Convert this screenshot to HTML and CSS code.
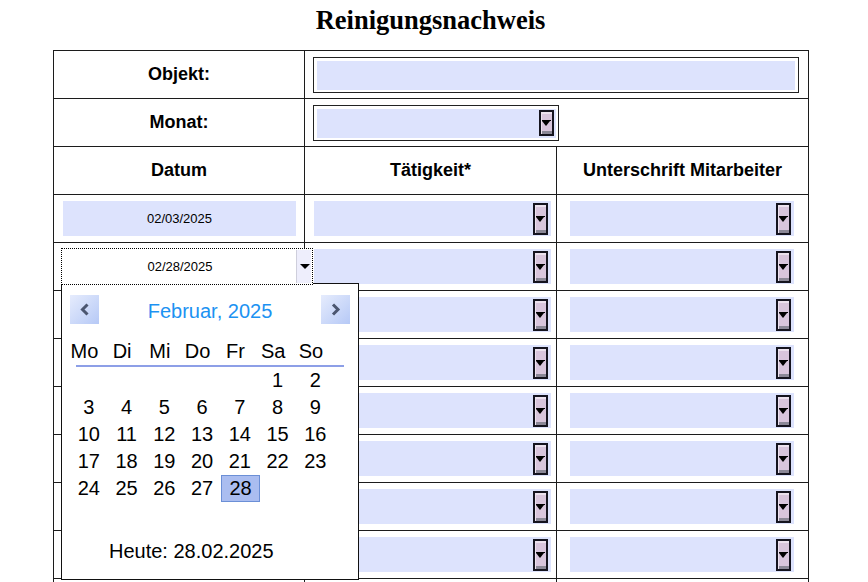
FILE: index.html
```html
<!DOCTYPE html>
<html lang="de">
<head>
    <meta charset="UTF-8">
    <title>Reinigungsnachweis</title>
    <link rel="stylesheet" href="styles.css">
</head>
<body>

<div class="page">
    <h1>Reinigungsnachweis</h1>

    <table class="sheet">
        <colgroup>
            <col class="c1">
            <col class="c2">
            <col class="c3">
        </colgroup>
        <tr>
            <th>Objekt:</th>
            <td colspan="2"><div class="text-input"><div class="fill"></div></div></td>
        </tr>
        <tr>
            <th>Monat:</th>
            <td colspan="2"><div class="month-select"><div class="fill"><span class="dd small"></span></div></div></td>
        </tr>
        <tr>
            <th>Datum</th>
            <th>Tätigkeit*</th>
            <th>Unterschrift Mitarbeiter</th>
        </tr>
        <tr>
            <td><div class="date-field">02/03/2025</div></td>
            <td><div class="field job"><span class="dd"></span></div></td>
            <td><div class="field sign"><span class="dd"></span></div></td>
        </tr>
        <tr>
            <td><div class="date-field focused">02/28/2025<span class="picker-btn"></span></div></td>
            <td><div class="field job"><span class="dd"></span></div></td>
            <td><div class="field sign"><span class="dd"></span></div></td>
        </tr>
        <tr>
            <td><div class="date-field"></div></td>
            <td><div class="field job"><span class="dd"></span></div></td>
            <td><div class="field sign"><span class="dd"></span></div></td>
        </tr>
        <tr>
            <td><div class="date-field"></div></td>
            <td><div class="field job"><span class="dd"></span></div></td>
            <td><div class="field sign"><span class="dd"></span></div></td>
        </tr>
        <tr>
            <td><div class="date-field"></div></td>
            <td><div class="field job"><span class="dd"></span></div></td>
            <td><div class="field sign"><span class="dd"></span></div></td>
        </tr>
        <tr>
            <td><div class="date-field"></div></td>
            <td><div class="field job"><span class="dd"></span></div></td>
            <td><div class="field sign"><span class="dd"></span></div></td>
        </tr>
        <tr>
            <td><div class="date-field"></div></td>
            <td><div class="field job"><span class="dd"></span></div></td>
            <td><div class="field sign"><span class="dd"></span></div></td>
        </tr>
        <tr>
            <td><div class="date-field"></div></td>
            <td><div class="field job"><span class="dd"></span></div></td>
            <td><div class="field sign"><span class="dd"></span></div></td>
        </tr>
        <tr>
            <td><div class="date-field"></div></td>
            <td><div class="field job"><span class="dd"></span></div></td>
            <td><div class="field sign"><span class="dd"></span></div></td>
        </tr>
    </table>

    <!-- Kalender-Popup zum Datumsfeld -->
    <div class="calendar">
        <div class="cal-head">
            <span class="nav">
                <svg width="29" height="29" viewBox="0 0 29 29"><polyline points="17.5,9.5 12.5,14.5 17.5,19.5" fill="none" stroke="#4b5670" stroke-width="3"/></svg>
            </span>
            <span class="cal-title">Februar, 2025</span>
            <span class="nav">
                <svg width="29" height="29" viewBox="0 0 29 29"><polyline points="12,9.5 17,14.5 12,19.5" fill="none" stroke="#4b5670" stroke-width="3"/></svg>
            </span>
        </div>
        <div class="weekdays">
            <span>Mo</span><span>Di</span><span>Mi</span><span>Do</span><span>Fr</span><span>Sa</span><span>So</span>
        </div>
        <div class="cal-line"></div>
        <div class="days">
            <span></span><span></span><span></span><span></span><span></span><span>1</span><span>2</span>
            <span>3</span><span>4</span><span>5</span><span>6</span><span>7</span><span>8</span><span>9</span>
            <span>10</span><span>11</span><span>12</span><span>13</span><span>14</span><span>15</span><span>16</span>
            <span>17</span><span>18</span><span>19</span><span>20</span><span>21</span><span>22</span><span>23</span>
            <span>24</span><span>25</span><span>26</span><span>27</span><span class="selected">28</span>
        </div>
        <div class="today">Heute: 28.02.2025</div>
    </div>
</div>

</body>
</html>
```

FILE: styles.css
```css
body {
    margin: 0;
    font-family: "Liberation Sans", Arial, sans-serif;
    background-color: white;
    color: black;
}

.page {
    position: relative;
    width: 755px;
    margin-left: 53px;
    padding-top: 5px;
}

h1 {
    font-family: "Liberation Serif", "Times New Roman", serif;
    font-size: 26.5px;
    line-height: 30px;
    text-align: center;
    margin: 0 0 15px 0;
}

.sheet {
    width: 755px;
    table-layout: fixed;
    border-collapse: collapse;
}

.sheet col.c1 { width: 251px; }
.sheet col.c2 { width: 252px; }
.sheet col.c3 { width: 252px; }

.sheet th,
.sheet td {
    border: 1px solid #1c1c1c;
    height: 47px;
    padding: 0;
    vertical-align: middle;
}

.sheet th {
    font-size: 18px;
    font-weight: bold;
    text-align: center;
}

/* Objekt-Eingabe */
.text-input {
    width: 486px;
    height: 36px;
    margin-left: 8px;
    box-sizing: border-box;
    border: 1px solid #222;
    padding: 3px 3px 2px 3px;
    background: white;
}

.text-input .fill,
.month-select .fill {
    height: 100%;
    background-color: #dde3fd;
}

.month-select {
    width: 246px;
    height: 36px;
    margin-left: 8px;
    box-sizing: border-box;
    border: 1px solid #222;
    padding: 3px 2px 2px 3px;
    background: white;
}

.month-select .fill {
    display: flex;
    align-items: center;
    justify-content: flex-end;
    padding-right: 2px;
}

/* Datumsfelder */
.date-field {
    width: 233px;
    height: 35px;
    margin-left: 9px;
    background-color: #dde3fd;
    font-size: 13px;
    line-height: 35px;
    text-align: center;
}

.date-field.focused {
    position: relative;
    z-index: 1;
    width: 252px;
    height: 37px;
    margin-left: 7px;
    box-sizing: border-box;
    border: 1px dotted #000;
    background-color: white;
    line-height: 35px;
    padding-right: 14px;
}

.picker-btn {
    position: absolute;
    right: 1px;
    top: 1px;
    width: 15px;
    height: 33px;
    box-sizing: border-box;
    background-color: #eeeefc;
    border-left: 1px solid #cfcfdc;
}

.picker-btn::after {
    content: "";
    position: absolute;
    left: 3px;
    top: 14px;
    border-left: 5px solid transparent;
    border-right: 5px solid transparent;
    border-top: 5px solid #000;
}

/* Auswahlfelder */
.field {
    height: 35px;
    background-color: #dde3fd;
    display: flex;
    align-items: center;
    justify-content: flex-end;
    padding-right: 3px;
    box-sizing: border-box;
}

.field.job {
    width: 237px;
    margin-left: 9px;
}

.field.sign {
    width: 224px;
    margin-left: 13px;
}

.dd {
    position: relative;
    display: block;
    width: 15px;
    height: 32px;
    box-sizing: border-box;
    border: 2px solid #15141f;
    background-color: #d8c5dc;
    box-shadow: inset 1px 2px 0 #ece2ee, inset 0 -3px 0 #8b8897;
}

.dd.small {
    height: 26px;
}

.dd::before {
    content: "";
    position: absolute;
    left: 1px;
    right: 1px;
    top: 50%;
    margin-top: -3px;
    height: 1px;
    background-color: #000;
}

.dd::after {
    content: "";
    position: absolute;
    left: 1px;
    top: 50%;
    margin-top: -2px;
    border-left: 4.5px solid transparent;
    border-right: 4.5px solid transparent;
    border-top: 5px solid #000;
}

/* Kalender */
.calendar {
    position: absolute;
    left: 8px;
    top: 283px;
    width: 298px;
    height: 297px;
    box-sizing: border-box;
    border: 1px solid #111;
    background-color: white;
    font-size: 20px;
}

.cal-head {
    display: flex;
    justify-content: space-between;
    align-items: center;
    padding: 11px 8px 0 8px;
}

.nav {
    display: block;
    width: 29px;
    height: 29px;
    background: linear-gradient(135deg, #e6ecfd, #b6c9f6);
}

.nav svg {
    display: block;
}

.cal-title {
    color: #1c92f2;
    font-size: 20px;
    padding-top: 4px;
}

.weekdays {
    display: grid;
    grid-template-columns: repeat(7, 37.75px);
    margin: 13px 0 0 3.5px;
    height: 28px;
    line-height: 28px;
}

.weekdays span {
    text-align: center;
}

.cal-line {
    height: 2px;
    margin: 0 14px;
    background-color: #8d9fe7;
}

.days {
    display: grid;
    grid-template-columns: repeat(7, 37.75px);
    grid-auto-rows: 27px;
    margin-left: 8px;
}

.days span {
    text-align: center;
    line-height: 27px;
    box-sizing: border-box;
}

.days .selected {
    background-color: #aabdf0;
    border: 1px solid #6b8fd6;
    line-height: 25px;
    width: 39px;
}

.today {
    margin-top: 38px;
    padding-left: 47px;
    line-height: 23px;
}
```
